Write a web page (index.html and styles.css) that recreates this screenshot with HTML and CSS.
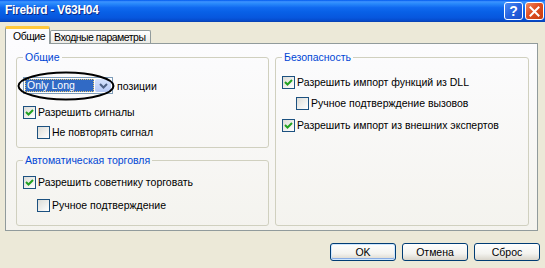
FILE: index.html
```html
<!DOCTYPE html>
<html lang="ru">
<head>
    <meta charset="UTF-8">
    <title>Firebird - V63H04</title>
    <link rel="stylesheet" href="styles.css">
</head>
<body>

    <div class="window">
        <!-- Caption -->
        <div class="titlebar">
            <span class="title">Firebird - V63H04</span>
            <div class="caption-btns">
                <span class="cbtn help">?</span>
                <span class="cbtn close">
                    <svg width="11" height="11" viewBox="0 0 11 11"><path d="M1.5 1.5 L9.5 9.5 M9.5 1.5 L1.5 9.5" stroke="#fff" stroke-width="2" stroke-linecap="square"/></svg>
                </span>
            </div>
        </div>

        <div class="client">
            <!-- Tabs -->
            <div class="tabs">
                <div class="tab active">Общие</div>
                <div class="tab">Входные параметры</div>
            </div>

            <div class="panel">
                <div class="col">
                    <fieldset class="group group-common">
                        <legend>Общие</legend>
                        <div class="combo-row">
                            <div class="combo">
                                <span class="combo-value">Only Long</span>
                                <span class="combo-arrow">
                                    <svg width="9" height="6" viewBox="0 0 9 6"><path d="M1 1 L4.5 4.5 L8 1" fill="none" stroke="#4D6185" stroke-width="2"/></svg>
                                </span>
                            </div>
                            <span>позиции</span>
                            <svg class="ring" width="98" height="30" viewBox="0 0 98 30"><ellipse cx="49" cy="15" rx="47.5" ry="13.5" fill="none" stroke="#000" stroke-width="2"/></svg>
                        </div>
                        <label class="check on r1">Разрешить сигналы</label>
                        <label class="check sub r2">Не повторять сигнал</label>
                    </fieldset>

                    <fieldset class="group group-trade">
                        <legend>Автоматическая торговля</legend>
                        <label class="check on">Разрешить советнику торговать</label>
                        <label class="check sub r3">Ручное подтверждение</label>
                    </fieldset>
                </div>

                <fieldset class="group group-safety">
                    <legend>Безопасность</legend>
                    <label class="check on">Разрешить импорт функций из DLL</label>
                    <label class="check sub r4">Ручное подтверждение вызовов</label>
                    <label class="check on r5">Разрешить импорт из внешних экспертов</label>
                </fieldset>
            </div>

            <!-- Dialog buttons -->
            <div class="buttons">
                <button class="default">OK</button>
                <button>Отмена</button>
                <button>Сброс</button>
            </div>
        </div>
    </div>

</body>
</html>
```

FILE: styles.css
```css
/* Global */
body {
    margin: 0;
    font-family: "Liberation Sans", Arial, sans-serif;
    font-size: 10.5px;
    color: #000;
}

.window {
    width: 545px;
    height: 268px;
    background: #ECE9D8;
    display: flex;
    flex-direction: column;
    overflow: hidden;
}

/* Caption bar */
.titlebar {
    flex: none;
    height: 22px;
    display: flex;
    justify-content: space-between;
    align-items: flex-start;
    background: linear-gradient(to bottom, #0058EE 0%, #3D93FF 8%, #2A8AFB 16%, #1069F0 35%, #0860E6 55%, #0757DE 80%, #0549C9 95%, #0A3FA8 100%);
}

.title {
    color: #fff;
    font-weight: bold;
    font-size: 12px;
    letter-spacing: -0.3px;
    line-height: 20px;
    padding-left: 5px;
    text-shadow: 1px 1px 0 #0A2A8A;
}

.caption-btns {
    display: flex;
    gap: 2px;
    padding: 2px 1px 0 0;
}

.cbtn {
    width: 19px;
    height: 18px;
    box-sizing: border-box;
    border: 1px solid #fff;
    border-radius: 3px;
    display: flex;
    align-items: center;
    justify-content: center;
    color: #fff;
    font-weight: bold;
    font-size: 14px;
}

.help {
    background: linear-gradient(135deg, #4C8CF5 0%, #2663E0 50%, #1C4FC8 100%);
}

.close {
    background: linear-gradient(135deg, #EE8A66 0%, #E04E21 45%, #C53D10 100%);
}

/* Client area */
.client {
    flex: 1;
    padding: 4px 7px 0 5px;
    display: flex;
    flex-direction: column;
}

/* Tabs */
.tabs {
    display: flex;
    align-items: flex-end;
    height: 17px;
    position: relative;
    z-index: 1;
}

.tab {
    box-sizing: border-box;
    width: 101px;
    height: 13px;
    line-height: 12px;
    padding: 0 0 0 3px;
    border: 1px solid #919B9C;
    border-bottom: none;
    border-radius: 2px 2px 0 0;
    background: linear-gradient(#FFFFFF, #ECEBE6);
    white-space: nowrap;
    letter-spacing: -0.5px;
    overflow: hidden;
}

.tab.active {
    width: 45px;
    height: 18px;
    margin-bottom: -1px;
    padding: 0 0 0 7px;
    line-height: 15px;
    border-top: 3px solid #FFC83C;
    background: #FCFCFE;
}

/* Tab page */
.panel {
    box-sizing: border-box;
    height: 188px;
    border: 1px solid #919B9C;
    background: linear-gradient(#FCFCFE, #F4F3EE);
    padding: 7px 8px 4px 10px;
    display: grid;
    grid-template-columns: 253px 254px;
    column-gap: 6px;
}

.col {
    display: flex;
    flex-direction: column;
}

/* Group boxes */
.group {
    margin: 0;
    min-width: 0;
    border: 1px solid #D0D0BF;
    border-radius: 3px;
    padding: 0 0 0 6px;
}

.group legend {
    color: #0046D5;
    padding: 0 2px;
    line-height: 13px;
}

.group-common {
    padding-top: 13px;
    padding-bottom: 8px;
}

.group-trade {
    margin-top: 6px;
    padding-top: 9px;
    padding-bottom: 13px;
}

.group-safety {
    padding-top: 12px;
}

/* Combo box */
.combo-row {
    position: relative;
    display: flex;
    align-items: center;
    gap: 4px;
    height: 17px;
}

.combo {
    box-sizing: border-box;
    width: 90px;
    height: 17px;
    display: flex;
    border: 1px solid #7F9DB9;
    background: #fff;
    padding: 1px;
}

.combo-value {
    flex: 1;
    background: #316AC5;
    color: #fff;
    line-height: 13px;
    padding-left: 2px;
    outline: 1px dotted #E8C870;
    outline-offset: -1px;
    margin-right: 1px;
}

.combo-arrow {
    width: 16px;
    border-radius: 2px;
    background: linear-gradient(#D6E3FD, #B4C8F6);
    display: flex;
    align-items: center;
    justify-content: center;
}

.ring {
    position: absolute;
    left: -6px;
    top: -6px;
}

/* Check boxes */
.check {
    display: flex;
    align-items: center;
    height: 13px;
    line-height: 13px;
    white-space: nowrap;
}

.check::before {
    content: "";
    flex: none;
    width: 13px;
    height: 13px;
    box-sizing: border-box;
    margin-right: 2px;
    border: 1px solid #1C5180;
    background: linear-gradient(135deg, #DCDCD7, #FFFFFF);
}

.check.on::before {
    background:
        url("data:image/svg+xml,%3Csvg xmlns='http://www.w3.org/2000/svg' width='11' height='11'%3E%3Cpath d='M2 5 L4.5 7.5 L9 3' fill='none' stroke='%2321A121' stroke-width='2'/%3E%3C/svg%3E") no-repeat center,
        linear-gradient(135deg, #DCDCD7, #FFFFFF);
}

.check.sub {
    margin-left: 14px;
}

.r1 { margin-top: 12px; }
.r2 { margin-top: 7px; }
.r3 { margin-top: 10px; }
.r4 { margin-top: 8px; }
.r5 { margin-top: 9px; }

/* Dialog buttons */
.buttons {
    display: flex;
    justify-content: flex-end;
    gap: 6px;
    margin-top: 12px;
    margin-right: -2px;
}

.buttons button {
    width: 66px;
    height: 18px;
    padding: 0;
    box-sizing: border-box;
    border: 1px solid #003C74;
    border-radius: 3px;
    background: linear-gradient(#FFFFFF, #F3F3EF 60%, #D9D5CB);
    font-family: inherit;
    font-size: 10.5px;
    color: #000;
}

.buttons button.default {
    box-shadow: inset 0 0 0 1px #CEE7FF, inset 0 -1px 0 1px #89ADE4;
}
```
